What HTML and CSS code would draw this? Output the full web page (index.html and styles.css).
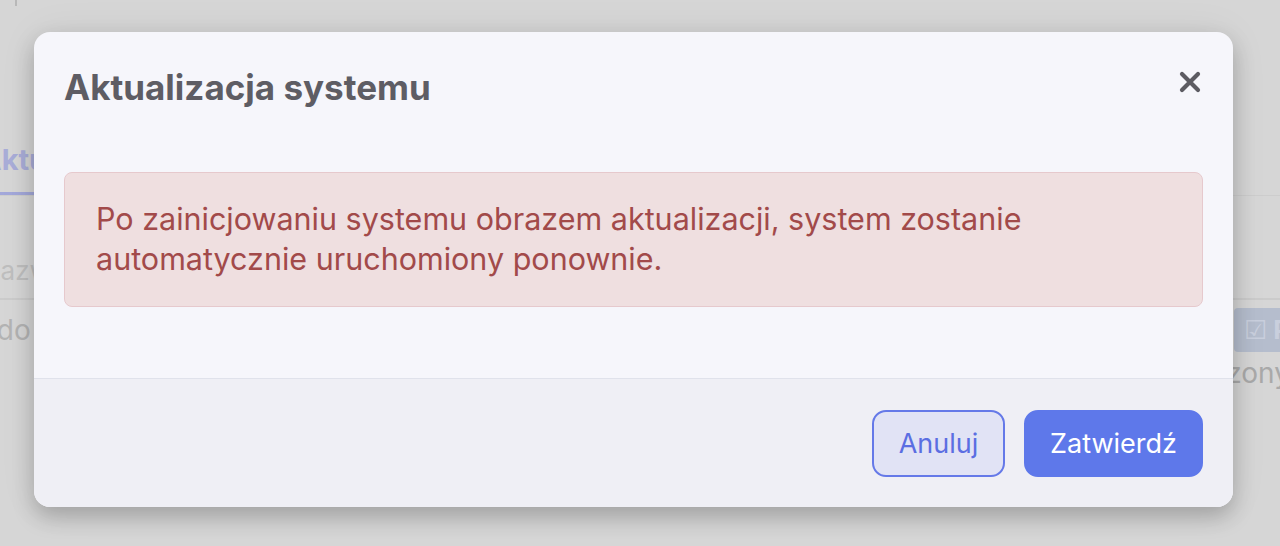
FILE: index.html
```html
<!DOCTYPE html>
<html lang="pl">
<head>
<meta charset="utf-8">
<title>Aktualizacja systemu</title>
<link rel="stylesheet" href="styles.css">
</head>
<body>
<div class="page">
  <div class="topmark"></div>
  <div class="tabs">
    <div class="tab active">Aktualizacja</div>
  </div>
  <div class="table">
    <div class="thead"><span class="th">Nazwa</span></div>
    <div class="row">
      <span class="cell">Wydo</span>
      <span class="badge"><span class="chk">☑</span> Przesłano</span>
    </div>
    <div class="row2"><span class="cell2">Uszkodzony</span></div>
  </div>
</div>

<div class="modal" role="dialog">
  <div class="modal-header">
    <h2 class="modal-title">Aktualizacja systemu</h2>
    <button class="close" aria-label="Zamknij">
      <svg width="22" height="22" viewBox="0 0 22 22"><path d="M3 3 L19 19 M19 3 L3 19" stroke="#5c5b62" stroke-width="4.2" stroke-linecap="round"/></svg>
    </button>
  </div>
  <div class="modal-body">
    <div class="alert">Po zainicjowaniu systemu obrazem aktualizacji, system zostanie automatycznie uruchomiony ponownie.</div>
  </div>
  <div class="modal-footer">
    <button class="btn btn-cancel">Anuluj</button>
    <button class="btn btn-primary">Zatwierdź</button>
  </div>
</div>
</body>
</html>
```

FILE: styles.css
```css
html, body {
  margin: 0;
  padding: 0;
}
body {
  background: #d6d6d6;
  font-family: Inter, "Noto Sans", "Liberation Sans", sans-serif;
  width: 1280px;
  height: 546px;
  overflow: hidden;
  position: relative;
}
.page {
  display: flex;
  flex-direction: column;
}
.topmark {
  width: 2px;
  height: 6px;
  margin-left: 15px;
  background: #b8b8b8;
}
.tabs {
  margin-top: 134px;
  display: flex;
  border-bottom: 1px solid #cdcdcd;
}
.tab {
  margin-left: -20px;
  font-size: 29px;
  font-weight: 700;
  color: #a9add8;
  padding-bottom: 12px;
  border-bottom: 3px solid #a3a8da;
  line-height: 40px;
  white-space: nowrap;
}
.table {
  display: flex;
  flex-direction: column;
}
.thead {
  height: 102px;
  display: flex;
  align-items: flex-end;
  border-bottom: 2px solid #cbcbcb;
}
.th {
  margin-left: -19px;
  font-size: 26px;
  color: #bebebe;
  padding-bottom: 12px;
}
.row {
  height: 60px;
  display: flex;
  align-items: center;
  justify-content: space-between;
}
.cell {
  margin-left: -46px;
  font-size: 28px;
  color: #b3b3b3;
}
.badge {
  margin-right: -96px;
  background: #b5bdcd;
  color: #c9cfdd;
  font-size: 26px;
  font-weight: 700;
  padding: 6px 10px 7px 10px;
  border-radius: 4px;
  width: 122px;
  white-space: nowrap;
  overflow: hidden;
}
.chk {
  font-weight: 400;
}
.row2 {
  display: flex;
  justify-content: flex-end;
}
.cell2 {
  margin-right: -10px;
  font-size: 28px;
  color: #a9a9a9;
  margin-top: -4px;
  white-space: nowrap;
}

.modal {
  position: absolute;
  left: 34px;
  top: 32px;
  width: 1199px;
  height: 475px;
  background: #f6f6fb;
  border-radius: 16px;
  box-shadow: 0 10px 22px rgba(0,0,0,0.22), 0 0 40px rgba(0,0,0,0.06);
  overflow: hidden;
  display: flex;
  flex-direction: column;
}
.modal-header {
  display: flex;
  justify-content: space-between;
  align-items: flex-start;
  padding: 34px 30px 0 30px;
}
.modal-title {
  margin: 0;
  font-size: 35px;
  font-weight: 700;
  line-height: 42px;
  color: #5e5d64;
}
.close {
  border: none;
  background: none;
  padding: 0;
  margin-top: 5px;
  margin-right: 2px;
  width: 22px;
  height: 22px;
  cursor: pointer;
}
.close svg {
  display: block;
}
.modal-body {
  padding: 64px 30px 0 30px;
  flex: 1;
  border-bottom: 1px solid #e0e2eb;
}
.alert {
  background: #efdfe0;
  border: 1px solid #e6c9cd;
  border-radius: 8px;
  color: #a24a4a;
  font-size: 30.5px;
  line-height: 40px;
  padding: 26px 31px 27px 31px;
}
.modal-footer {
  background: #efeff5;
  height: 128px;
  box-sizing: border-box;
  display: flex;
  justify-content: flex-end;
  align-items: flex-start;
  gap: 19px;
  padding: 31px 30px 0 30px;
}
.btn {
  font-family: Inter, "Noto Sans", "Liberation Sans", sans-serif;
  font-size: 27px;
  height: 67px;
  border-radius: 14px;
  cursor: pointer;
}
.btn-cancel {
  width: 133px;
  background: #e1e3f5;
  border: 2px solid #6579e8;
  color: #5b6ee2;
}
.btn-primary {
  width: 179px;
  background: #5e78ea;
  border: 2px solid #5e78ea;
  color: #ffffff;
}
```
